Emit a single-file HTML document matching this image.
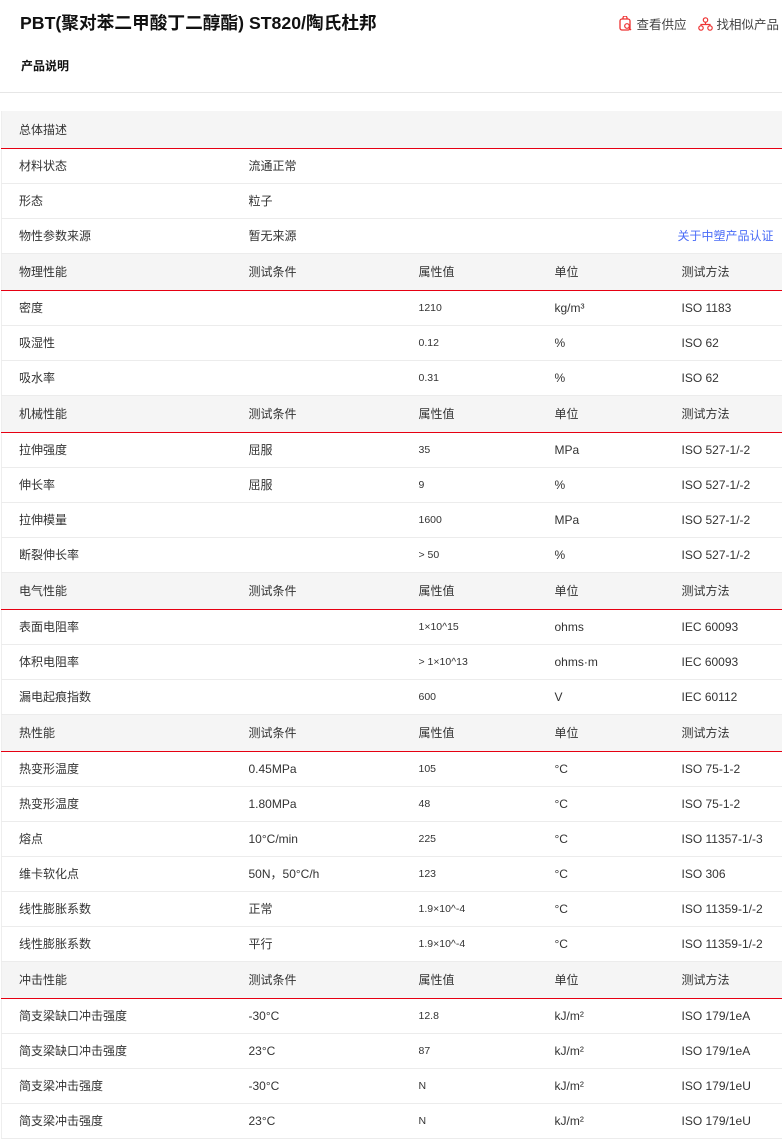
<!DOCTYPE html>
<html><head><meta charset="utf-8"><style>
*{margin:0;padding:0;box-sizing:border-box}
body{width:782px;height:1132px;overflow:hidden;background:#fff;font-family:"Liberation Sans","Noto Sans CJK SC",sans-serif;color:#333;font-size:12px}
.title{position:absolute;left:20px;top:9px;font-size:17.7px;font-weight:bold;color:#111}
.links{position:absolute;right:3px;top:14px;font-size:12.5px;color:#444;display:flex;gap:12px;align-items:center}
.links span{display:flex;align-items:center;gap:3px}
.sub{position:absolute;left:21px;top:57px;font-size:12px;font-weight:bold;color:#111}
.hr{position:absolute;left:0;top:92px;width:782px;height:1px;background:#e6e6e6}
table{position:absolute;left:1px;top:111px;width:800px;border-collapse:collapse;table-layout:fixed;border-left:1px solid #eee}
td{height:35px;border-bottom:1px solid #ececec;padding:0;vertical-align:middle;white-space:nowrap;overflow:visible}
tr.h td{height:37px;background:#f5f5f5;border-bottom:1px solid #e60012}
td:nth-child(1){padding-left:17px}
td:nth-child(3){font-size:10.5px}
tr.h td:nth-child(3){font-size:12px}
.b{color:#4a6cf7;text-align:right}
</style></head><body>
<div class="title">PBT(聚对苯二甲酸丁二醇酯) ST820/陶氏杜邦</div>
<div class="links">
<span><svg width="14" height="15" viewBox="0 0 14 15"><rect x="1" y="3" width="10" height="11" rx="2" fill="none" stroke="#e33" stroke-width="1.3"/><path d="M4 3V2a2 2 0 0 1 4 0v1" fill="none" stroke="#e33" stroke-width="1.3"/><circle cx="8" cy="10" r="2.3" fill="#fff" stroke="#e33" stroke-width="1.2"/><path d="M9.7 11.7L12 14" stroke="#e33" stroke-width="1.3"/></svg>查看供应</span>
<span><svg width="15" height="14" viewBox="0 0 15 14"><circle cx="7.5" cy="3" r="2.2" fill="none" stroke="#e33" stroke-width="1.2"/><circle cx="3" cy="11" r="2.2" fill="none" stroke="#e33" stroke-width="1.2"/><circle cx="12" cy="11" r="2.2" fill="none" stroke="#e33" stroke-width="1.2"/><path d="M7.5 5.2V7.5M3 8.8V7.5H12V8.8" fill="none" stroke="#e33" stroke-width="1.2"/></svg>找相似产品</span>
</div>
<div class="sub">产品说明</div>
<div class="hr"></div>
<table>
<colgroup><col style="width:247px"><col style="width:170px"><col style="width:136px"><col style="width:127px"><col style="width:120px"></colgroup>
<tr class="h"><td>总体描述</td><td></td><td></td><td></td><td></td></tr>
<tr><td>材料状态</td><td>流通正常</td><td></td><td></td><td></td></tr>
<tr><td>形态</td><td>粒子</td><td></td><td></td><td></td></tr>
<tr><td>物性参数来源</td><td>暂无来源</td><td></td><td></td><td><span style="color:#4a6cf7;margin-left:-4px">关于中塑产品认证</span></td></tr>
<tr class="h"><td>物理性能</td><td>测试条件</td><td>属性值</td><td>单位</td><td>测试方法</td></tr>
<tr><td>密度</td><td></td><td>1210</td><td>kg/m³</td><td>ISO 1183</td></tr>
<tr><td>吸湿性</td><td></td><td>0.12</td><td>%</td><td>ISO 62</td></tr>
<tr><td>吸水率</td><td></td><td>0.31</td><td>%</td><td>ISO 62</td></tr>
<tr class="h"><td>机械性能</td><td>测试条件</td><td>属性值</td><td>单位</td><td>测试方法</td></tr>
<tr><td>拉伸强度</td><td>屈服</td><td>35</td><td>MPa</td><td>ISO 527-1/-2</td></tr>
<tr><td>伸长率</td><td>屈服</td><td>9</td><td>%</td><td>ISO 527-1/-2</td></tr>
<tr><td>拉伸模量</td><td></td><td>1600</td><td>MPa</td><td>ISO 527-1/-2</td></tr>
<tr><td>断裂伸长率</td><td></td><td>&gt; 50</td><td>%</td><td>ISO 527-1/-2</td></tr>
<tr class="h"><td>电气性能</td><td>测试条件</td><td>属性值</td><td>单位</td><td>测试方法</td></tr>
<tr><td>表面电阻率</td><td></td><td>1×10^15</td><td>ohms</td><td>IEC 60093</td></tr>
<tr><td>体积电阻率</td><td></td><td>&gt; 1×10^13</td><td>ohms·m</td><td>IEC 60093</td></tr>
<tr><td>漏电起痕指数</td><td></td><td>600</td><td>V</td><td>IEC 60112</td></tr>
<tr class="h"><td>热性能</td><td>测试条件</td><td>属性值</td><td>单位</td><td>测试方法</td></tr>
<tr><td>热变形温度</td><td>0.45MPa</td><td>105</td><td>°C</td><td>ISO 75-1-2</td></tr>
<tr><td>热变形温度</td><td>1.80MPa</td><td>48</td><td>°C</td><td>ISO 75-1-2</td></tr>
<tr><td>熔点</td><td>10°C/min</td><td>225</td><td>°C</td><td>ISO 11357-1/-3</td></tr>
<tr><td>维卡软化点</td><td>50N，50°C/h</td><td>123</td><td>°C</td><td>ISO 306</td></tr>
<tr><td>线性膨胀系数</td><td>正常</td><td>1.9×10^-4</td><td>°C</td><td>ISO 11359-1/-2</td></tr>
<tr><td>线性膨胀系数</td><td>平行</td><td>1.9×10^-4</td><td>°C</td><td>ISO 11359-1/-2</td></tr>
<tr class="h"><td>冲击性能</td><td>测试条件</td><td>属性值</td><td>单位</td><td>测试方法</td></tr>
<tr><td>简支梁缺口冲击强度</td><td>-30°C</td><td>12.8</td><td>kJ/m²</td><td>ISO 179/1eA</td></tr>
<tr><td>简支梁缺口冲击强度</td><td>23°C</td><td>87</td><td>kJ/m²</td><td>ISO 179/1eA</td></tr>
<tr><td>简支梁冲击强度</td><td>-30°C</td><td>N</td><td>kJ/m²</td><td>ISO 179/1eU</td></tr>
<tr><td>简支梁冲击强度</td><td>23°C</td><td>N</td><td>kJ/m²</td><td>ISO 179/1eU</td></tr>
</table>
</body></html>
